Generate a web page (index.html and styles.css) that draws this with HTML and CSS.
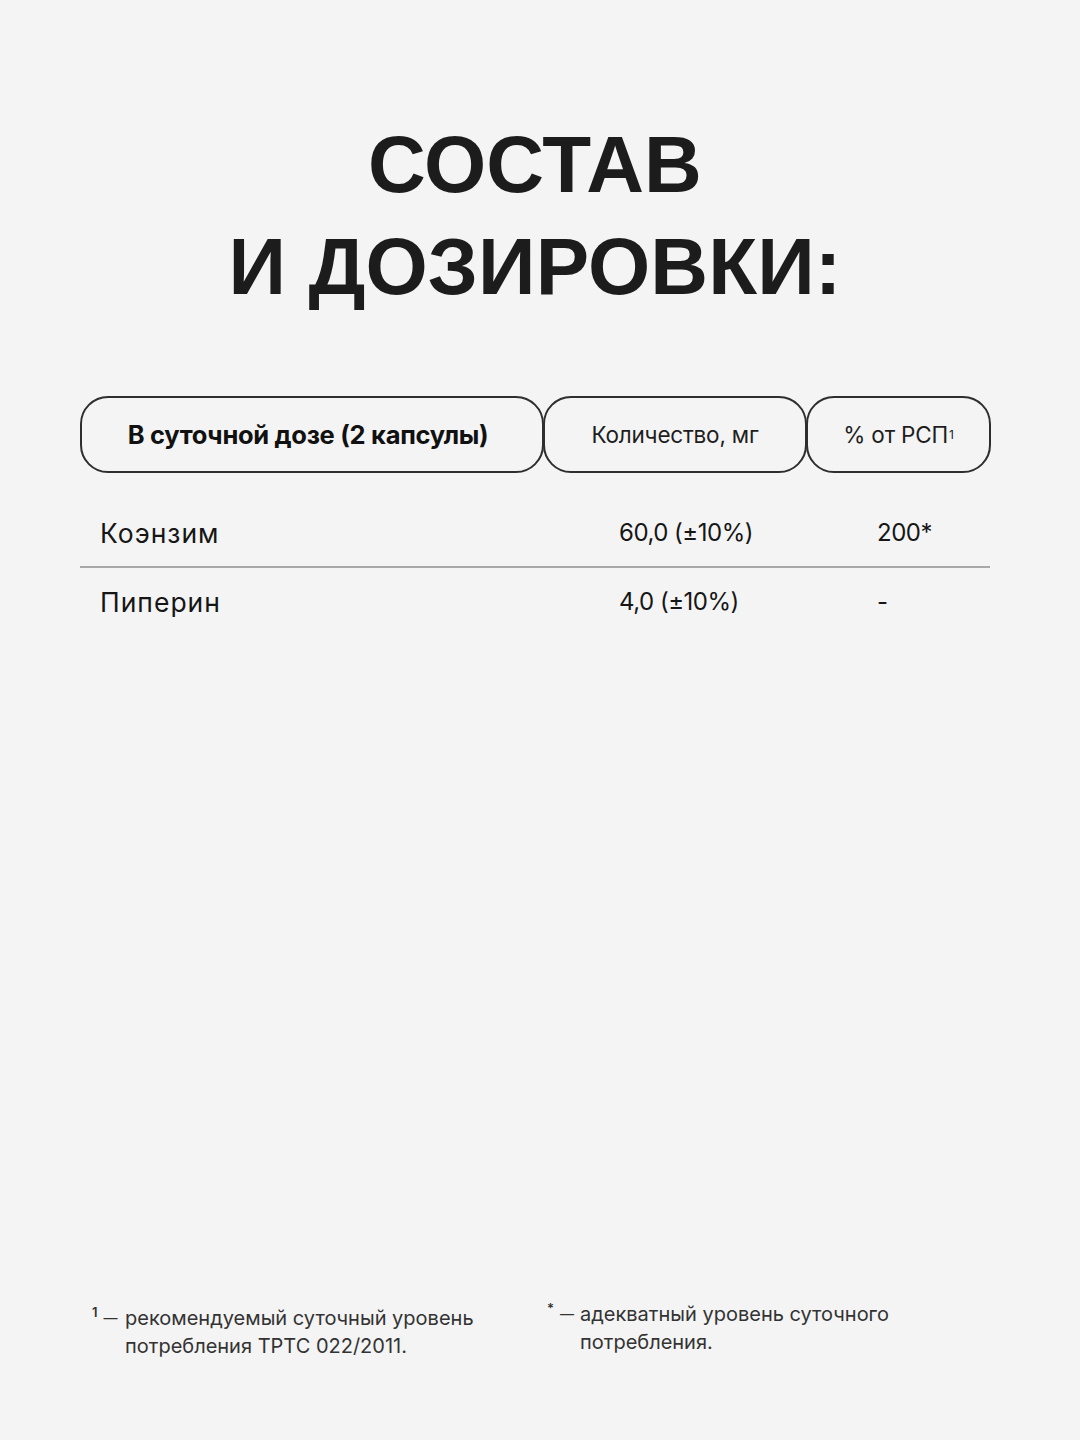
FILE: index.html
```html
<!DOCTYPE html>
<html lang="ru">
<head>
<meta charset="utf-8">
<title>Состав и дозировки</title>
<link rel="stylesheet" href="styles.css">
</head>
<body>
<main class="page">
  <h1 class="title">СОСТАВ<br>И ДОЗИРОВКИ:</h1>

  <section class="table">
    <div class="head">
      <div class="pill pill-main">В суточной дозе (2 капсулы)</div>
      <div class="pill">Количество, мг</div>
      <div class="pill">% от РСП<sup class="sup">1</sup></div>
    </div>
    <div class="row row-first">
      <span class="name">Коэнзим</span>
      <span class="val">60,0 (±10%)</span>
      <span class="pct">200*</span>
    </div>
    <div class="row row-last">
      <span class="name">Пиперин</span>
      <span class="val">4,0 (±10%)</span>
      <span class="pct">-</span>
    </div>
  </section>

  <div class="spacer"></div>

  <footer class="notes">
    <div class="note note-left">
      <span class="mark"><sup class="fsup">1</sup><span class="dash">—</span></span>
      <span class="ntext">рекомендуемый суточный уровень<br>потребления ТРТС 022/2011.</span>
    </div>
    <div class="note note-right">
      <span class="mark"><sup class="fsup">*</sup><span class="dash">—</span></span>
      <span class="ntext">адекватный уровень суточного<br>потребления.</span>
    </div>
  </footer>
</main>
</body>
</html>
```

FILE: styles.css
```css
html, body {
  margin: 0;
  padding: 0;
  background: #f4f4f4;
}

.page {
  width: 1080px;
  height: 1440px;
  display: flex;
  flex-direction: column;
  font-family: "Inter", "Liberation Sans", sans-serif;
  color: #141414;
}

.title {
  margin: 0;
  padding: 114px 10px 0 0;
  font-family: "Liberation Sans", Arial, sans-serif;
  font-weight: 700;
  font-size: 80px;
  line-height: 102px;
  text-align: center;
  color: #1c1c1c;
  letter-spacing: 0.1px;
}

.table {
  margin: 78px 90px 0 80px;
}

.head {
  display: grid;
  grid-template-columns: 463px 263px 184px;
  height: 77px;
}

.pill {
  border: 2px solid #2e2e2e;
  border-radius: 28px;
  display: flex;
  align-items: center;
  justify-content: center;
  font-size: 22.5px;
  font-weight: 400;
  letter-spacing: -0.2px;
  color: #1e1e1e;
  margin-right: -1px;
}

.pill-main {
  font-weight: 700;
  font-size: 25.5px;
  letter-spacing: -0.3px;
  color: #111;
  padding-right: 8px;
}

.sup {
  font-size: 12px;
  vertical-align: 9px;
  line-height: 0;
  margin-left: 1px;
}

.row {
  display: grid;
  grid-template-columns: 519px 258px 1fr;
  padding-left: 20px;
  font-size: 24px;
  line-height: 30px;
  color: #161616;
}

.name {
  font-size: 26.5px;
  letter-spacing: 1px;
}

.val,
.pct {
  letter-spacing: -0.5px;
}

.row-first {
  margin-top: 45px;
  padding-bottom: 18px;
  border-bottom: 2px solid #a8a8a8;
}

.row-last {
  padding-top: 19px;
}

.spacer {
  flex: 1;
}

.notes {
  display: grid;
  grid-template-columns: 455px 1fr;
  padding-left: 92px;
  height: 140px;
  font-size: 20px;
  line-height: 28px;
  color: #333;
}

.note {
  display: flex;
  align-items: flex-start;
}

.note-left {
  padding-top: 4px;
}

.mark {
  width: 33px;
  flex: none;
  white-space: nowrap;
}

.fsup {
  font-size: 13px;
  font-weight: 600;
  vertical-align: 8px;
  line-height: 0;
}

.dash {
  display: inline-block;
  margin-left: 6px;
  font-size: 14px;
  vertical-align: 2px;
}
```
